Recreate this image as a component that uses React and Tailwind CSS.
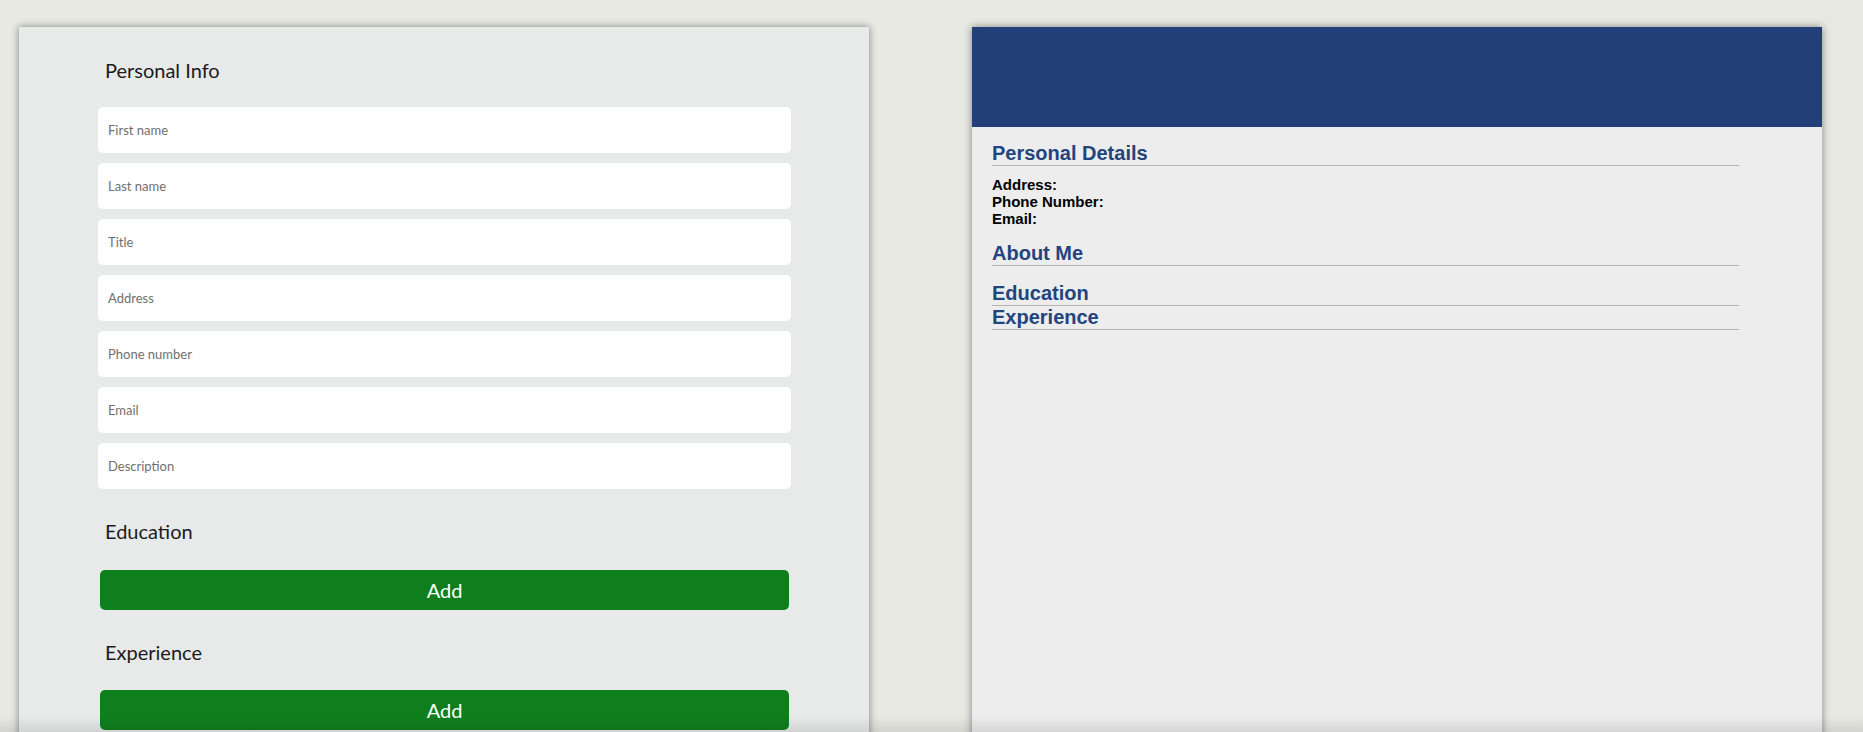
const FIELDS = ['First name', 'Last name', 'Title', 'Address', 'Phone number', 'Email', 'Description'];

function SectionTitle({ children, className = '' }) {
  return <h2 className={`ml-[7px] text-[20px] leading-[26px] text-[#1b1b1b] ${className}`}>{children}</h2>;
}

function AddButton() {
  return (
    <button className="ml-[2px] h-[40px] w-[689px] rounded-[5px] bg-[#0f7f1e] text-[20px] text-white">
      Add
    </button>
  );
}

function Editor() {
  return (
    <div className="h-[780px] w-[850px] shrink-0 bg-[#e8eaea] pl-[79px] pt-[30px] shadow-[0_0_8px_rgba(0,0,0,0.45)]">
      <SectionTitle>Personal Info</SectionTitle>
      <div className="mt-[24px] flex flex-col gap-[10px]">
        {FIELDS.map((f) => (
          <input
            key={f}
            placeholder={f}
            className="h-[46px] w-[693px] rounded-[5px] bg-white px-[10px] text-[13px] text-[#333] outline-none placeholder:text-[#707070]"
          />
        ))}
      </div>
      <SectionTitle className="mt-[29px]">Education</SectionTitle>
      <div className="mt-[26px]">
        <AddButton />
      </div>
      <SectionTitle className="mt-[29px]">Experience</SectionTitle>
      <div className="mt-[25px]">
        <AddButton />
      </div>
    </div>
  );
}

function Heading({ children, className = '' }) {
  return (
    <h2 className={`w-[747px] border-b border-[#b4b4b4] text-[20px] font-bold leading-[23px] text-[#23447d] ${className}`}>
      {children}
    </h2>
  );
}

function Preview() {
  return (
    <div className="h-[780px] w-[850px] shrink-0 bg-[#ededed] shadow-[0_0_8px_rgba(0,0,0,0.45)] [font-family:'Liberation_Sans',Arial,sans-serif]">
      <div className="h-[100px] bg-[#224077]" />
      <div className="pl-[20px] pt-[15px]">
        <Heading>Personal Details</Heading>
        <div className="mt-[10px] text-[15px] font-bold leading-[17px] text-black">
          <div>Address:</div>
          <div>Phone Number:</div>
          <div>Email:</div>
        </div>
        <Heading className="mt-[15px]">About Me</Heading>
        <Heading className="mt-[16px]">Education</Heading>
        <Heading>Experience</Heading>
      </div>
    </div>
  );
}

export default function App() {
  return (
    <div className="relative flex h-screen gap-[103px] overflow-hidden bg-[#e9e9e4] pl-[19px] pt-[27px] [font-family:Lato,'Noto_Sans',sans-serif]">
      <Editor />
      <Preview />
      <div className="pointer-events-none absolute inset-x-0 bottom-0 h-[16px] bg-linear-to-b from-transparent to-black/10" />
    </div>
  );
}
